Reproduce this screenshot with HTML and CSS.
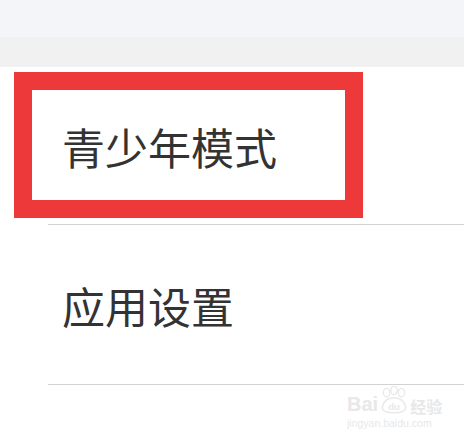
FILE: index.html
```html
<!DOCTYPE html>
<html lang="zh-CN">
<head>
    <meta charset="UTF-8">
    <meta name="viewport" content="width=device-width, initial-scale=1.0">
    <title>设置</title>
    <link rel="stylesheet" href="styles.css">
</head>
<body>
    <header class="status"></header>
    <div class="gap"></div>

    <ul class="settings">
        <li class="row">青少年模式</li>
        <li class="row">应用设置</li>
    </ul>

    <!-- recuadro rojo encima del primer item -->
    <div class="highlight"></div>

    <div class="watermark">
        <div class="brand">
            <span>Bai</span>
            <svg width="32" height="28" viewBox="0 0 30 26">
                <ellipse cx="8" cy="6" rx="3" ry="4" fill="none" stroke="#e8e8e8" stroke-width="1.2"/>
                <ellipse cx="15" cy="4" rx="3" ry="4" fill="none" stroke="#e8e8e8" stroke-width="1.2"/>
                <ellipse cx="22" cy="6" rx="3" ry="4" fill="none" stroke="#e8e8e8" stroke-width="1.2"/>
                <path d="M4 20 Q6 11 15 11 Q24 11 26 20 Q26 25 15 25 Q4 25 4 20 Z" fill="none" stroke="#e8e8e8" stroke-width="1.4"/>
                <text x="15" y="22" text-anchor="middle" font-size="9" fill="#e8e8e8" font-family="Liberation Sans">du</text>
            </svg>
            <span class="cn">经验</span>
        </div>
        <small>jingyan.baidu.com</small>
    </div>
</body>
</html>
```

FILE: styles.css
```css
body {
    margin: 0;
    font-family: "Noto Sans CJK SC", "Noto Sans", sans-serif;
    background: #fff;
    color: #333;
    position: relative;
    height: 444px;
    overflow: hidden;
}

.status {
    height: 37px;
    background: #f4f5f9;
}

.gap {
    height: 30px;
    background: #f1f1f1;
}

.settings {
    list-style: none;
    margin: 0;
    padding: 0;
}

.row {
    height: 157px;
    margin-left: 48px;
    padding-left: 14px;
    border-bottom: 1px solid #d2d2d2;

    display: flex;
    align-items: center;
    font-size: 43px;
    color: #333;

    & + .row {
        height: 159px;
        padding-top: 1px;
        box-sizing: border-box;
        height: 160px;
    }
}

.highlight {
    position: absolute;
    left: 14px;
    top: 72px;
    width: 349px;
    height: 146px;
    box-sizing: border-box;
    border: 18px solid #ee393a;
}

.watermark {
    position: absolute;
    left: 347px;
    top: 386px;
    color: #e8e8e8;
    font-family: "Liberation Sans", sans-serif;

    .brand {
        display: flex;
        align-items: flex-end;
        font-size: 20px;
        font-weight: bold;
        line-height: 1;
    }

    .cn {
        font-family: "Noto Sans CJK SC", sans-serif;
        font-size: 16px;
    }

    small {
        display: block;
        font-size: 10.5px;
        margin-top: 3px;
    }
}
```
